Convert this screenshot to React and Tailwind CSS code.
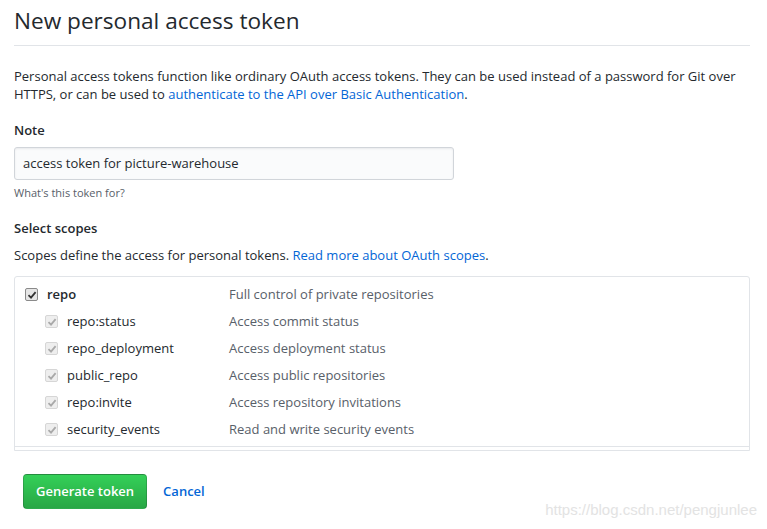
import React from "react";

const subScopes = [
  ["repo:status", "Access commit status"],
  ["repo_deployment", "Access deployment status"],
  ["public_repo", "Access public repositories"],
  ["repo:invite", "Access repository invitations"],
  ["security_events", "Read and write security events"],
];

function Check({ disabled }) {
  return (
    <span
      className={`inline-flex items-center justify-center w-[13px] h-[13px] rounded-[2px] border ${
        disabled ? "border-[#d6d6d6] bg-[#eeeeee]" : "border-[#8a8a8a] bg-[#e6e6e6]"
      }`}
    >
      <svg width="10" height="10" viewBox="0 0 10 10">
        <path
          d="M1.5 5.2 L4 7.6 L8.6 2.2"
          fill="none"
          stroke={disabled ? "#a9a9a9" : "#333"}
          strokeWidth="1.8"
        />
      </svg>
    </span>
  );
}

export default function App() {
  return (
    <div
      className="relative w-[767px] h-[529px] bg-white text-[#24292e] overflow-hidden"
      style={{ fontFamily: '"Open Sans", "Noto Sans", sans-serif' }}
    >
      <div className="px-[14px] pt-[4px] w-[764px]">
        <h1 className="text-[22.6px] leading-[34px] font-normal pb-[7px] border-b border-[#e1e4e8]">
          New personal access token
        </h1>
        <p className="mt-[21px] text-[13px] leading-[18px]">
          Personal access tokens function like ordinary OAuth access tokens. They can be used instead of a password for Git over HTTPS, or can be used to{" "}
          <a className="text-[#0366d6]">authenticate to the API over Basic Authentication</a>.
        </p>

        <div className="mt-[17px] text-[13px] font-semibold leading-[20px]">Note</div>
        <div className="mt-[7px] w-[440px] h-[33px] rounded-[3px] border border-[#d1d5da] bg-[#fafbfc] shadow-[inset_0_1px_2px_rgba(27,31,35,0.075)] flex items-center px-[8px] text-[13px]">
          access token for picture-warehouse
        </div>
        <div className="mt-[4px] text-[11px] text-[#586069] leading-[18px]">What's this token for?</div>

        <div className="mt-[16px] text-[13px] font-semibold leading-[20px]">Select scopes</div>
        <p className="mt-[7px] text-[13px] leading-[20px]">
          Scopes define the access for personal tokens.{" "}
          <a className="text-[#0366d6]">Read more about OAuth scopes</a>.
        </p>

        <div className="mt-[11px] h-[175px] overflow-hidden border border-[#e1e4e8] rounded-t-[3px]">
          <div className="border-b border-[#e1e4e8] pb-[3px]">
            <div className="flex items-center h-[27px] mt-[4px] text-[13px]">
              <div className="w-[32px] pl-[10px] flex"><Check /></div>
              <div className="w-[182px] font-semibold">repo</div>
              <div className="text-[#586069]">Full control of private repositories</div>
            </div>
            {subScopes.map(([name, desc]) => (
              <div key={name} className="flex items-center h-[27px] text-[13px]">
                <div className="w-[52px] pl-[30px] flex"><Check disabled /></div>
                <div className="w-[162px]">{name}</div>
                <div className="text-[#586069]">{desc}</div>
              </div>
            ))}
          </div>
        </div>

        <div className="mt-[23px] ml-[9px] flex items-center gap-[16px]">
          <button className="h-[35px] px-[12px] rounded-[4px] border border-[rgba(27,31,35,0.2)] bg-gradient-to-b from-[#34d058] to-[#28a745] text-white text-[13px] font-semibold">
            Generate token
          </button>
          <a className="text-[#0366d6] text-[13px] font-semibold">Cancel</a>
        </div>
      </div>

      <div
        className="absolute right-[10px] bottom-[8px] text-[15px] text-[#e3e3e3]"
        style={{ fontFamily: '"Liberation Sans Narrow", "Liberation Sans", sans-serif' }}
      >
        https://blog.csdn.net/pengjunlee
      </div>
    </div>
  );
}
